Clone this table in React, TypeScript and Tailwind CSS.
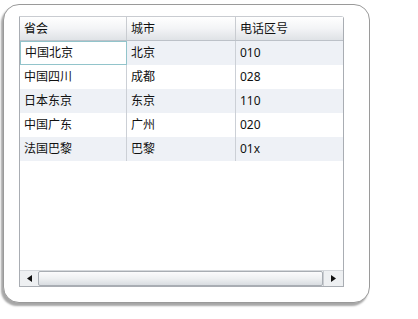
import React from 'react';

const ROWS: [string, string, string][] = [
  ['中国北京', '北京', '010'],
  ['中国四川', '成都', '028'],
  ['日本东京', '东京', '110'],
  ['中国广东', '广州', '020'],
  ['法国巴黎', '巴黎', '01x'],
];

const font = { fontFamily: '"Noto Sans", "Noto Sans CJK SC", sans-serif' };

export default function App() {
  return (
    <div className="w-[418px] h-[319px] bg-white pt-[4px] pl-[3px]" style={font}>
      <div className="w-[367px] h-[299px] rounded-[16px] border border-[#9a9a9a] bg-white shadow-[-2px_3px_2px_rgba(0,0,0,0.35)] pt-[11px] pl-[15px]">
        <div className="w-[325px] h-[271px] border border-[#a9adb3] border-t-[#c9ccd1] rounded-tr-[3px] flex flex-col text-[12px] text-[#111]">
          {/* header */}
          <div className="flex h-[24px] bg-gradient-to-b from-white via-[#f3f4f6] to-[#dfe2e6] border-b border-[#bcc1c8]">
            <div className="w-[107px] border-r border-[#c9ccd1] pl-[4px] flex items-center">省会</div>
            <div className="w-[109px] border-r border-[#c9ccd1] pl-[4px] flex items-center">城市</div>
            <div className="flex-1 pl-[4px] flex items-center">电话区号</div>
          </div>
          {/* rows */}
          {ROWS.map((r, i) => (
            <div key={i} className={`flex h-[24px] ${i % 2 === 0 ? 'bg-[#eef1f6]' : 'bg-white'}`}>
              <div
                className={`w-[107px] pl-[4px] flex items-center ${
                  i === 0 ? 'bg-white border border-[#92c4cb]' : 'border-r border-[#ccd0d6]'
                }`}
              >
                {r[0]}
              </div>
              <div className="w-[109px] border-r border-[#ccd0d6] pl-[4px] flex items-center">{r[1]}</div>
              <div className="flex-1 pl-[4px] flex items-center">{r[2]}</div>
            </div>
          ))}
          <div className="flex-1 bg-white" />
          {/* horizontal scrollbar */}
          <div className="flex h-[16px] bg-[#f0f1f2] border-t border-[#d5d8dc]">
            <div className="w-[18px] flex items-center justify-center bg-[#eef0f2]">
              <svg width="5" height="7" viewBox="0 0 5 7"><path d="M5 0 L0 3.5 L5 7 Z" fill="#111" /></svg>
            </div>
            <div className="flex-1 rounded-[2px] border border-[#a8adb3] bg-gradient-to-b from-[#fbfbfc] via-[#eef0f2] to-[#d9dde1]" />
            <div className="w-[20px] flex items-center justify-center bg-[#eef0f2] border-l border-[#c9ccd1]">
              <svg width="5" height="7" viewBox="0 0 5 7"><path d="M0 0 L5 3.5 L0 7 Z" fill="#111" /></svg>
            </div>
          </div>
        </div>
      </div>
    </div>
  );
}
